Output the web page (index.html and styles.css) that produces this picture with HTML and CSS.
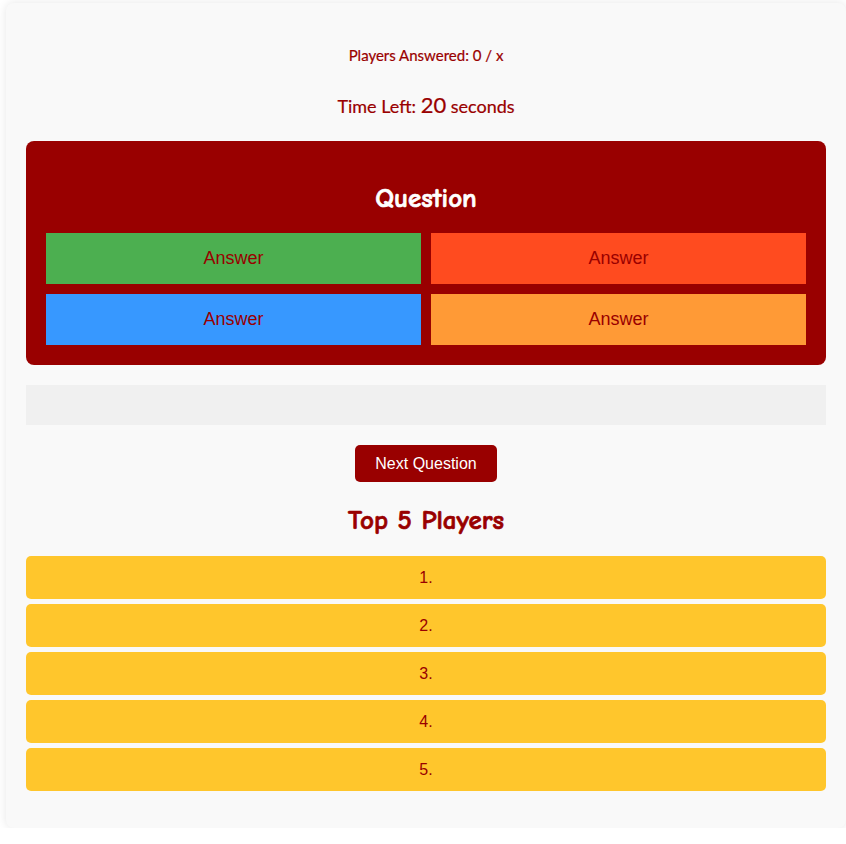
FILE: index.html
```html
<!DOCTYPE html>
<html>
<head>
<meta charset="utf-8">
<link rel="stylesheet" href="styles.css">
</head>
<body>
<div class="container">
  <p class="answered">Players Answered: 0 / x</p>
  <p class="timer">Time Left: <span class="time-num">20</span> seconds</p>
  <div class="question-box">
    <h2 class="question">Question</h2>
    <div class="answers">
      <button class="answer green">Answer</button>
      <button class="answer red">Answer</button>
      <button class="answer blue">Answer</button>
      <button class="answer orange">Answer</button>
    </div>
  </div>
  <div class="feedback"></div>
  <div class="next-wrap"><button class="next">Next Question</button></div>
  <h2 class="top-title">Top 5 Players</h2>
  <ul class="leaderboard">
    <li>1.</li>
    <li>2.</li>
    <li>3.</li>
    <li>4.</li>
    <li>5.</li>
  </ul>
</div>
</body>
</html>
```

FILE: styles.css
```css
html, body {
  margin: 0;
  padding: 0;
  background: #ffffff;
}

.container {
  box-sizing: border-box;
  width: 840px;
  margin: 3px 0 0 6px;
  padding: 20px;
  background: #f9f9f9;
  border-radius: 8px;
  box-shadow: 0 0 10px rgba(0, 0, 0, 0.1);
  font-family: "Liberation Sans", Arial, sans-serif;
  color: #990000;
  text-align: center;
}

.answered {
  margin: 22px 0 0 0;
  font-family: Lato, "Open Sans", sans-serif;
  font-size: 15px;
  line-height: 20px;
  -webkit-text-stroke: 0.2px #990000;
}

.timer {
  margin: 28px 0 23px 0;
  font-family: Lato, "Open Sans", sans-serif;
  font-size: 18px;
  line-height: 24px;
  -webkit-text-stroke: 0.2px #990000;
}

.time-num {
  font-size: 22px;
}

.question-box {
  background: #990000;
  border-radius: 8px;
  padding: 20px;
}

.question {
  margin: 22px 0 18px 0;
  font-family: "Comic Sans MS", "Comic Neue", Lato, sans-serif;
  font-weight: bold;
  font-size: 27px;
  line-height: 32px;
  color: #ffffff;
  -webkit-text-stroke: 0.7px #ffffff;
}

.answers {
  display: grid;
  grid-template-columns: 1fr 1fr;
  gap: 10px;
}

.answer {
  border: none;
  border-radius: 0;
  padding: 15px;
  height: 51px;
  font-family: "Liberation Sans", Arial, sans-serif;
  font-size: 18px;
  color: #990000;
}

.green { background: #4caf50; }
.red { background: #ff4b1f; }
.blue { background: #3798ff; }
.orange { background: #ff9a36; }

.feedback {
  margin-top: 20px;
  height: 40px;
  background: #f0f0f0;
}

.next-wrap {
  margin-top: 20px;
  display: flex;
  justify-content: center;
}

.next {
  border: none;
  border-radius: 5px;
  background: #990000;
  color: #ffffff;
  font-family: "Liberation Sans", Arial, sans-serif;
  font-size: 16px;
  line-height: 18px;
  padding: 10px 20px 9px;
  width: 142px;
}

.top-title {
  margin: 24px 0 20px 0;
  font-family: "Comic Sans MS", "Comic Neue", Lato, sans-serif;
  font-weight: bold;
  font-size: 27px;
  line-height: 30px;
  color: #990000;
  -webkit-text-stroke: 0.7px #990000;
}

.leaderboard {
  list-style: none;
  margin: 0 0 17px 0;
  padding: 0;
  display: flex;
  flex-direction: column;
  gap: 5px;
}

.leaderboard li {
  background: #ffc62c;
  border-radius: 5px;
  height: 43px;
  line-height: 43px;
  font-size: 16px;
  color: #990000;
}
```
